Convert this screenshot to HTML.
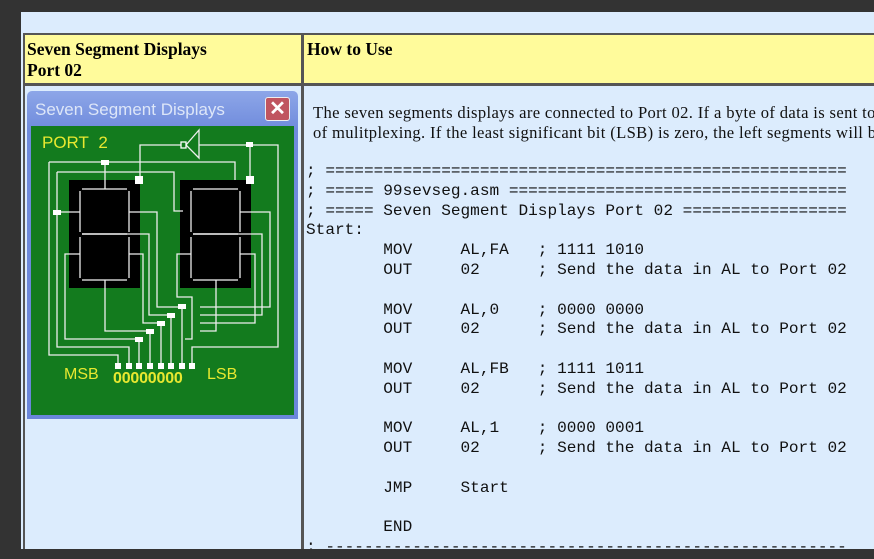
<!DOCTYPE html>
<html><head><meta charset="utf-8"><style>
body{margin:0;width:874px;height:559px;background:#333;position:relative;overflow:hidden;font-family:"Liberation Serif",serif}
.a{position:absolute}
.hdr{background:#fffb9b;font-weight:bold;font-size:17.5px;line-height:21px;color:#000}
pre{margin:0;font-family:"Liberation Mono",monospace;font-size:16.1px;line-height:19.8px;color:#111}
</style></head><body>
<div class="a" style="left:21px;top:12px;width:853px;height:537px;background:#dcecfd"></div>
<div class="a" style="left:23px;top:33px;width:851px;height:2px;background:#555"></div>
<div class="a" style="left:23px;top:83px;width:851px;height:3px;background:#555"></div>
<div class="a" style="left:23px;top:33px;width:2px;height:516px;background:#555"></div>
<div class="a" style="left:301px;top:33px;width:3px;height:516px;background:#555"></div>
<div class="a hdr" style="left:25px;top:35px;width:276px;height:48px;padding:4px 0 0 2px;box-sizing:border-box">Seven Segment Displays<br>Port 02</div>
<div class="a hdr" style="left:304px;top:35px;width:570px;height:48px;padding:4px 0 0 3px;box-sizing:border-box">How to Use</div>
<div class="a" style="left:313px;top:103px;font-size:16.6px;letter-spacing:0.35px;line-height:19.5px;white-space:nowrap;color:#111">The seven segments displays are connected to Port 02. If a byte of data is sent to<br>of mulitplexing. If the least significant bit (LSB) is zero, the left segments will b</div>
<pre class="a" style="left:306px;top:162px">; ======================================================
; ===== 99sevseg.asm ===================================
; ===== Seven Segment Displays Port 02 =================
Start:
        MOV     AL,FA   ; 1111 1010
        OUT     02      ; Send the data in AL to Port 02

        MOV     AL,0    ; 0000 0000
        OUT     02      ; Send the data in AL to Port 02

        MOV     AL,FB   ; 1111 1011
        OUT     02      ; Send the data in AL to Port 02

        MOV     AL,1    ; 0000 0001
        OUT     02      ; Send the data in AL to Port 02

        JMP     Start

        END
; ------------------------------------------------------</pre>
<div class="a" style="left:0;top:549px;width:874px;height:10px;background:#333"></div>
<!-- window -->
<div class="a" style="left:27px;top:91px;width:271px;height:328px;background:linear-gradient(#8da6e8,#6f8bdc 12%,#6a86da);border-radius:5px 5px 0 0"></div>
<div class="a" style="left:35px;top:100px;font-family:'Liberation Sans',sans-serif;font-size:17px;color:#dde6f8">Seven Segment Displays</div>
<div class="a" style="left:265px;top:97px;width:25px;height:24px;background:#c05560;border:1px solid #eee;border-radius:3px;box-sizing:border-box;color:#fff;font:bold 20px/22px 'Liberation Sans',sans-serif;text-align:center">✕</div>
<div class="a" style="left:31px;top:126px;width:263px;height:289px;background:#137b1e"></div>
<div class="a" style="left:42px;top:133px;font-family:'Liberation Sans',sans-serif;font-size:17px;color:#e8e830">PORT&nbsp; 2</div>
<div class="a" style="left:64px;top:366px;font-family:'Liberation Sans',sans-serif;font-size:16px;color:#e8e830">MSB</div>
<div class="a" style="left:207px;top:366px;font-family:'Liberation Sans',sans-serif;font-size:16px;color:#e8e830">LSB</div>
<div class="a" style="left:113px;top:370px;font-family:'Liberation Sans',sans-serif;font-weight:bold;font-size:16px;letter-spacing:-0.2px;color:#e8e830">00000000</div>
<svg class="a" style="left:0;top:0" width="874" height="559" fill="none" stroke="#eee" stroke-width="1.3">
<rect x="69" y="180" width="71" height="108" fill="#000" stroke="none"/>
<rect x="180" y="180" width="71" height="108" fill="#000" stroke="none"/>
<g stroke="#ccc" stroke-width="1.5">
<path d="M82 189H127M80 191V232M129 191V232M82 234H127M80 237V278M129 237V278M82 280H127"/>
<path d="M193 189H238M191 191V232M240 191V232M193 234H238M191 237V278M240 237V278M193 280H238"/>
</g>
<path d="M199 130L186 145L199 158Z"/>
<path d="M183 145H140V181M199 145H278V347H192V365M250 145V181"/>
<path d="M49 162H235V180M105 162V189M57 172H174V211H183M57 172V347H129V365M49 162V355H118V365M57 212H80"/>
<path d="M129 212H157V307H182M82 234H149V315H171M80 254H65V339H139M129 254H143V323H161M105 280V331H150"/>
<path d="M240 212H270V307H200M193 234H262V315H200M191 254H177V297H192V339H185M240 254H255V323H200M216 280V331H200"/>
<path d="M139 339V365M150 331V365M161 323V365M171 315V365M182 307V365"/>
<g fill="#fff" stroke="none">
<rect x="181" y="142" width="5" height="6" fill="#137b1e" stroke="#fff"/>
<rect x="135" y="176" width="8" height="8"/><rect x="246" y="176" width="8" height="8"/>
<rect x="246" y="142" width="7" height="5"/><rect x="101" y="160" width="8" height="5"/><rect x="53" y="210" width="8" height="5"/>
<rect x="178" y="304" width="8" height="5"/><rect x="167" y="313" width="8" height="5"/><rect x="157" y="321" width="8" height="5"/><rect x="146" y="329" width="8" height="5"/><rect x="135" y="337" width="8" height="5"/>
<rect x="115" y="363" width="6" height="6"/><rect x="126" y="363" width="6" height="6"/><rect x="136" y="363" width="6" height="6"/><rect x="147" y="363" width="6" height="6"/><rect x="158" y="363" width="6" height="6"/><rect x="168" y="363" width="6" height="6"/><rect x="179" y="363" width="6" height="6"/><rect x="189" y="363" width="6" height="6"/>
</g>
</svg>
</body></html>
